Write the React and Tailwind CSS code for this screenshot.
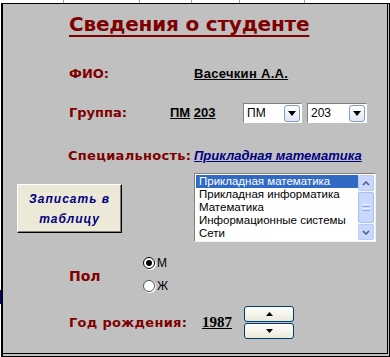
import { useState } from 'react'

const label = "font-['DejaVu_Sans',sans-serif] font-bold text-[13px] text-[#800000] whitespace-nowrap"
const specialties = [
  'Прикладная математика',
  'Прикладная информатика',
  'Математика',
  'Информационные системы',
  'Сети',
]

function Combo({ value, w }) {
  return (
    <div className={`${w} h-[20px] flex items-center bg-white border border-t-[#7f7f7f] border-l-[#7f7f7f] border-r-white border-b-white`}>
      <span className="flex-1 pl-[3px] text-[12px] font-['Liberation_Sans',sans-serif] text-black leading-none">{value}</span>
      <span className="w-[16px] h-[17px] mr-[1px] flex items-center justify-center rounded-[3px] border border-[#7f9db9] bg-gradient-to-b from-white to-[#dfe6f6]">
        <svg width="8" height="5" viewBox="0 0 8 5"><path d="M0 0h8L4 5z" fill="#000" /></svg>
      </span>
    </div>
  )
}

function Radio({ checked, text }) {
  return (
    <div className="flex items-center gap-[2px] h-[11px]">
      <span className={`w-[12px] h-[12px] rounded-full bg-white flex items-center justify-center border ${checked ? 'border-black' : 'border-[#555]'} shadow-[1px_1px_0_#ffffff]`}>
        {checked && <span className="w-[6px] h-[6px] rounded-full bg-black" />}
      </span>
      <span className="text-[12px] font-['Liberation_Sans',sans-serif] text-black leading-none">{text}</span>
    </div>
  )
}

function SpinBtn({ up }) {
  return (
    <button className="w-[50px] h-[16px] flex items-center justify-center rounded-[3px] border border-[#003c74] bg-gradient-to-b from-white to-[#ece9d8]">
      <svg width="7" height="4" viewBox="0 0 7 4">
        <path d={up ? 'M0 4h7L3.5 0z' : 'M0 0h7L3.5 4z'} fill="#000" />
      </svg>
    </button>
  )
}

export default function App() {
  const [sel, setSel] = useState(0)
  const [sex, setSex] = useState('М')

  return (
    <div className="w-[390px] h-[357px] bg-white flex flex-col overflow-hidden">
      {/* sheet grid peeking above the form */}
      <div className="h-[3px] flex">
        <div className="w-[64px] border-r border-[#a0a0a0]" />
        <div className="w-[76px] border-r border-[#a0a0a0]" />
        <div className="w-[52px] border-r border-[#a0a0a0]" />
        <div className="w-[48px] border-r border-[#a0a0a0]" />
        <div className="w-[65px] border-r border-[#a0a0a0]" />
        <div className="flex-1" />
      </div>

      <div className="flex-1 flex">
        <div className="w-[1px] flex flex-col">
          <div className="h-[287px]" />
          <div className="h-[14px] bg-[#0000a0]" />
        </div>
        <div className="flex-1 flex border-l-2 border-t border-r border-b border-black bg-[#c0c0c0]">
          <div className="flex-1 mr-[1px] mb-[2px] border-r border-b border-black flex flex-col">
            {/* title */}
            <div className="h-[44px] pt-[6px] pl-[66px]">
              <span className="font-['DejaVu_Sans',sans-serif] font-bold text-[20px] tracking-[-0.2px] leading-[28px] text-[#800000] underline decoration-2 underline-offset-[4px] whitespace-nowrap">
                Сведения о студенте
              </span>
            </div>

            <div className="mt-[14px] h-[24px] pl-[66px] flex items-center">
              <span className={`${label} w-[125px] shrink-0`}>ФИО:</span>
              <span className="font-['Liberation_Sans',sans-serif] font-bold text-[13px] tracking-[0.3px] text-black underline whitespace-nowrap">Васечкин А.А.</span>
            </div>

            <div className="mt-[15px] h-[24px] pl-[66px] flex items-center">
              <span className={`${label} w-[101px] shrink-0`}>Группа:</span>
              <span className="w-[73px] shrink-0 font-['Liberation_Sans',sans-serif] font-bold text-[13px] text-black whitespace-nowrap">
                <span className="underline">ПМ</span> <span className="underline">203</span>
              </span>
              <div className="flex gap-[5px]">
                <Combo value="ПМ" w="w-[59px]" />
                <Combo value="203" w="w-[60px]" />
              </div>
            </div>

            <div className="mt-[19px] h-[24px] pl-[65px] flex items-center">
              <span className={`${label} w-[126px] shrink-0 tracking-[0.3px]`}>Специальность:</span>
              <span className="font-['Liberation_Sans',sans-serif] font-bold italic text-[13px] text-[#000080] underline whitespace-nowrap">Прикладная математика</span>
            </div>

            <div className="mt-[5px] h-[69px] flex">
              <button className="ml-[14px] mt-[11px] w-[105px] h-[49px] bg-[#ece9d8] border border-t-white border-l-white border-r-black border-b-black shadow-[inset_-1px_-1px_0_#808080] flex flex-col items-center justify-center">
                <span className="font-['Liberation_Sans',sans-serif] font-bold italic text-[12px] leading-[20px] tracking-[1px] text-[#000080]">Записать в</span>
                <span className="font-['Liberation_Sans',sans-serif] font-bold italic text-[12px] leading-[20px] tracking-[1px] text-[#000080]">таблицу</span>
              </button>

              <div className="ml-[72px] w-[182px] h-[69px] bg-white border border-[#808080] border-r-[#f0f0f0] border-b-[#f0f0f0] p-[1px] flex">
                <div className="flex-1 flex flex-col">
                  {specialties.map((s, i) => (
                    <div
                      key={s}
                      onClick={() => setSel(i)}
                      className={`h-[13px] pl-[3px] flex items-center text-[11.5px] leading-none font-['Liberation_Sans',sans-serif] whitespace-nowrap ${i === sel ? 'bg-[#316ac5] text-white' : 'text-black'}`}
                    >
                      {s}
                    </div>
                  ))}
                </div>
                <div className="w-[16px] flex flex-col bg-[#f3f5fc]">
                  <div className="h-[16px] rounded-[2px] border border-[#b8cbf5] bg-[#c8d7fb] flex items-center justify-center">
                    <svg width="8" height="5" viewBox="0 0 8 5"><path d="M1 4l3-3 3 3" stroke="#4d6185" strokeWidth="1.6" fill="none" /></svg>
                  </div>
                  <div className="h-[31px] mt-[1px] rounded-[2px] border border-[#a8bff3] bg-[#c8d7fb] flex flex-col items-center justify-center gap-[1px]">
                    <span className="w-[7px] h-[1px] bg-[#eef3fe]" />
                    <span className="w-[7px] h-[1px] bg-[#8ca6e0]" />
                    <span className="w-[7px] h-[1px] bg-[#eef3fe]" />
                    <span className="w-[7px] h-[1px] bg-[#8ca6e0]" />
                  </div>
                  <div className="flex-1" />
                  <div className="h-[16px] rounded-[2px] border border-[#b8cbf5] bg-[#c8d7fb] flex items-center justify-center">
                    <svg width="8" height="5" viewBox="0 0 8 5"><path d="M1 1l3 3 3-3" stroke="#4d6185" strokeWidth="1.6" fill="none" /></svg>
                  </div>
                </div>
              </div>
            </div>

            <div className="mt-[13px] h-[37px] pl-[66px] flex">
              <span className={`${label} w-[74px] shrink-0 mt-[14px] text-[14px] leading-[15px]`}>Пол</span>
              <div className="flex flex-col gap-[12px] pt-[2px]">
                <div onClick={() => setSex('М')}><Radio checked={sex === 'М'} text="М" /></div>
                <div onClick={() => setSex('Ж')}><Radio checked={sex === 'Ж'} text="Ж" /></div>
              </div>
            </div>

            <div className="mt-[14px] h-[33px] pl-[66px] flex items-center">
              <span className={`${label} w-[133px] shrink-0 tracking-[0.3px]`}>Год рождения:</span>
              <span className="w-[42px] shrink-0 font-['Liberation_Serif',serif] font-bold text-[15px] text-black underline">1987</span>
              <div className="flex flex-col gap-[1px]">
                <SpinBtn up />
                <SpinBtn />
              </div>
            </div>
          </div>
        </div>
      </div>
    </div>
  )
}
